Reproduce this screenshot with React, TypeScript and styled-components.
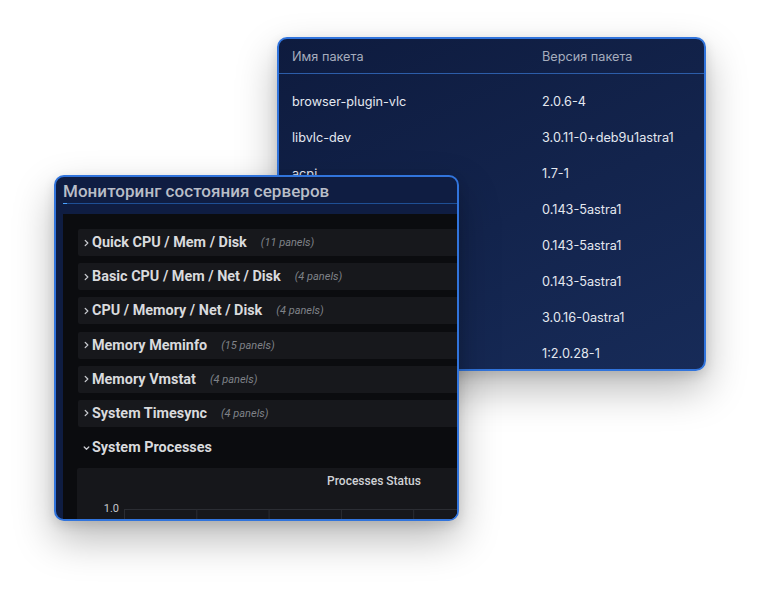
import styled, { createGlobalStyle } from 'styled-components';

const GlobalStyle = createGlobalStyle`
  html, body {
    margin: 0;
    padding: 0;
    background: #ffffff;
  }
`;

const Stage = styled.div`
  position: relative;
  width: 760px;
  height: 592px;
  overflow: hidden;
  background: #ffffff;
`;

// окна лежат поверх друг друга, как на рабочем столе
const Window = styled.div<{ $left: number; $top: number; $w: number; $h: number }>`
  position: absolute;
  left: ${(p) => p.$left}px;
  top: ${(p) => p.$top}px;
  width: ${(p) => p.$w}px;
  height: ${(p) => p.$h}px;
  box-sizing: border-box;
  border: 2px solid #3174dc;
  border-radius: 10px;
  overflow: hidden;
  box-shadow: 0 18px 40px rgba(0, 0, 0, 0.28), 0 4px 12px rgba(0, 0, 0, 0.12);
`;

/* ---------- таблица пакетов ---------- */

const PackagesWindow = styled(Window)`
  background: linear-gradient(155deg, #0e1b3e 0%, #13244d 55%, #172b58 100%);
  font-family: Inter, 'Noto Sans', sans-serif;
  display: flex;
  flex-direction: column;
`;

const TableHead = styled.div`
  flex: none;
  display: grid;
  grid-template-columns: 250px 1fr;
  height: 35px;
  padding-top: 1px;
  box-sizing: border-box;
  align-items: center;
  padding-left: 13px;
  border-bottom: 1px solid #2c5da9;
  color: #a6adbd;
  font-size: 12.7px;
`;

const TableBody = styled.div`
  padding-top: 9px;
  display: flex;
  flex-direction: column;
`;

const TableRow = styled.div`
  flex: none;
  display: grid;
  grid-template-columns: 250px 1fr;
  height: 36px;
  align-items: center;
  padding-left: 13px;
  color: #e4e8f0;
  font-size: 12.7px;
`;

/* ---------- дашборд ---------- */

const DashWindow = styled(Window)`
  background: #0f1d42;
  font-family: Roboto, 'Liberation Sans', sans-serif;
  display: flex;
  flex-direction: column;
`;

const DashTitle = styled.div`
  flex: none;
  height: 27px;
  padding-top: 1px;
  box-sizing: border-box;
  margin-left: 7px;
  display: flex;
  align-items: center;
  color: #b9bec8;
  font-size: 17px;
  font-weight: 500;
  letter-spacing: 0.05px;
  border-bottom: 1px solid #1e4f95;
  position: relative;

  &::after {
    content: '';
    position: absolute;
    left: 0;
    bottom: -1px;
    width: 4px;
    height: 1px;
    background: #4aa3ff;
  }
`;

const DashBody = styled.div`
  flex: 1;
  margin: 10px 0 0 7px;
  background: #0b0c0f;
  padding: 15px 0 0 15px;
  display: flex;
  flex-direction: column;
  gap: 7.2px;
  width: 640px;
`;

const RowBar = styled.div<{ $open?: boolean }>`
  flex: none;
  height: 27px;
  display: flex;
  align-items: center;
  padding-left: 3px;
  background: ${(p) => (p.$open ? 'transparent' : '#17181c')};
  border-radius: 2px;
`;

const Chevron = styled.svg`
  width: 11px;
  height: 10px;
  flex: none;
`;

const RowTitle = styled.span`
  color: #d9dadd;
  font-size: 14.4px;
  font-weight: 700;
`;

const RowCount = styled.span`
  margin-left: 14px;
  color: #7f8288;
  font-size: 11px;
  font-style: italic;
`;

const ChartPanel = styled.div`
  flex: none;
  background: #16171b;
  border-radius: 2px;
  margin-left: -1px;
  height: 80px;
  padding-top: 6px;
  display: flex;
  flex-direction: column;
`;

const ChartTitle = styled.div`
  text-align: center;
  color: #d0d2d6;
  font-size: 12px;
  font-weight: 500;
  line-height: 14px;
  width: 594px;
`;

const ChartArea = styled.div`
  display: flex;
  align-items: flex-start;
  margin-top: 21px;
`;

const AxisLabel = styled.span`
  width: 42px;
  text-align: right;
  color: #c6c8cc;
  font-size: 11px;
  line-height: 12px;
  margin-top: -6px;
`;

const Grid = styled.svg`
  margin-left: 5px;
  display: block;
`;

// имена в строках 4–8 закрыты окном дашборда
const packages: [string, string][] = [
  ['browser-plugin-vlc', '2.0.6-4'],
  ['libvlc-dev', '3.0.11-0+deb9u1astra1'],
  ['acpi', '1.7-1'],
  ['', '0.143-5astra1'],
  ['', '0.143-5astra1'],
  ['', '0.143-5astra1'],
  ['', '3.0.16-0astra1'],
  ['', '1:2.0.28-1'],
];

const rows: [string, string][] = [
  ['Quick CPU / Mem / Disk', '(11 panels)'],
  ['Basic CPU / Mem / Net / Disk', '(4 panels)'],
  ['CPU / Memory / Net / Disk', '(4 panels)'],
  ['Memory Meminfo', '(15 panels)'],
  ['Memory Vmstat', '(4 panels)'],
  ['System Timesync', '(4 panels)'],
];

function ChevronRight() {
  return (
    <Chevron viewBox="0 0 11 10">
      <path d="M4.2 2.4 L6.8 5 L4.2 7.6" fill="none" stroke="#c9cbd0" strokeWidth="1.3" strokeLinecap="round" strokeLinejoin="round" />
    </Chevron>
  );
}

function ChevronDown() {
  return (
    <Chevron viewBox="0 0 11 10">
      <path d="M3.2 4 L5.5 6.3 L7.8 4" fill="none" stroke="#c9cbd0" strokeWidth="1.3" strokeLinecap="round" strokeLinejoin="round" />
    </Chevron>
  );
}

export default function App() {
  return (
    <>
      <GlobalStyle />
      <Stage>
        <PackagesWindow $left={277} $top={37} $w={429} $h={334}>
          <TableHead>
            <span>Имя пакета</span>
            <span>Версия пакета</span>
          </TableHead>
          <TableBody>
            {packages.map(([name, ver], i) => (
              <TableRow key={i}>
                <span>{name}</span>
                <span>{ver}</span>
              </TableRow>
            ))}
          </TableBody>
        </PackagesWindow>

        <DashWindow $left={54} $top={175} $w={405} $h={346}>
          <DashTitle>Мониторинг состояния серверов</DashTitle>
          <DashBody>
            {rows.map(([title, count]) => (
              <RowBar key={title}>
                <ChevronRight />
                <RowTitle>{title}</RowTitle>
                <RowCount>{count}</RowCount>
              </RowBar>
            ))}
            <RowBar $open>
              <ChevronDown />
              <RowTitle>System Processes</RowTitle>
            </RowBar>
            <ChartPanel>
              <ChartTitle>Processes Status</ChartTitle>
              <ChartArea>
                <AxisLabel>1.0</AxisLabel>
                <Grid width="560" height="40">
                  <line x1="0" y1="0.5" x2="560" y2="0.5" stroke="#2b2d33" strokeWidth="1" />
                  {[0, 1, 2, 3, 4, 5, 6].map((k) => (
                    <line key={k} x1={0.5 + k * 72.3} y1="0" x2={0.5 + k * 72.3} y2="40" stroke="#2b2d33" strokeWidth="1" />
                  ))}
                </Grid>
              </ChartArea>
            </ChartPanel>
          </DashBody>
        </DashWindow>
      </Stage>
    </>
  );
}
